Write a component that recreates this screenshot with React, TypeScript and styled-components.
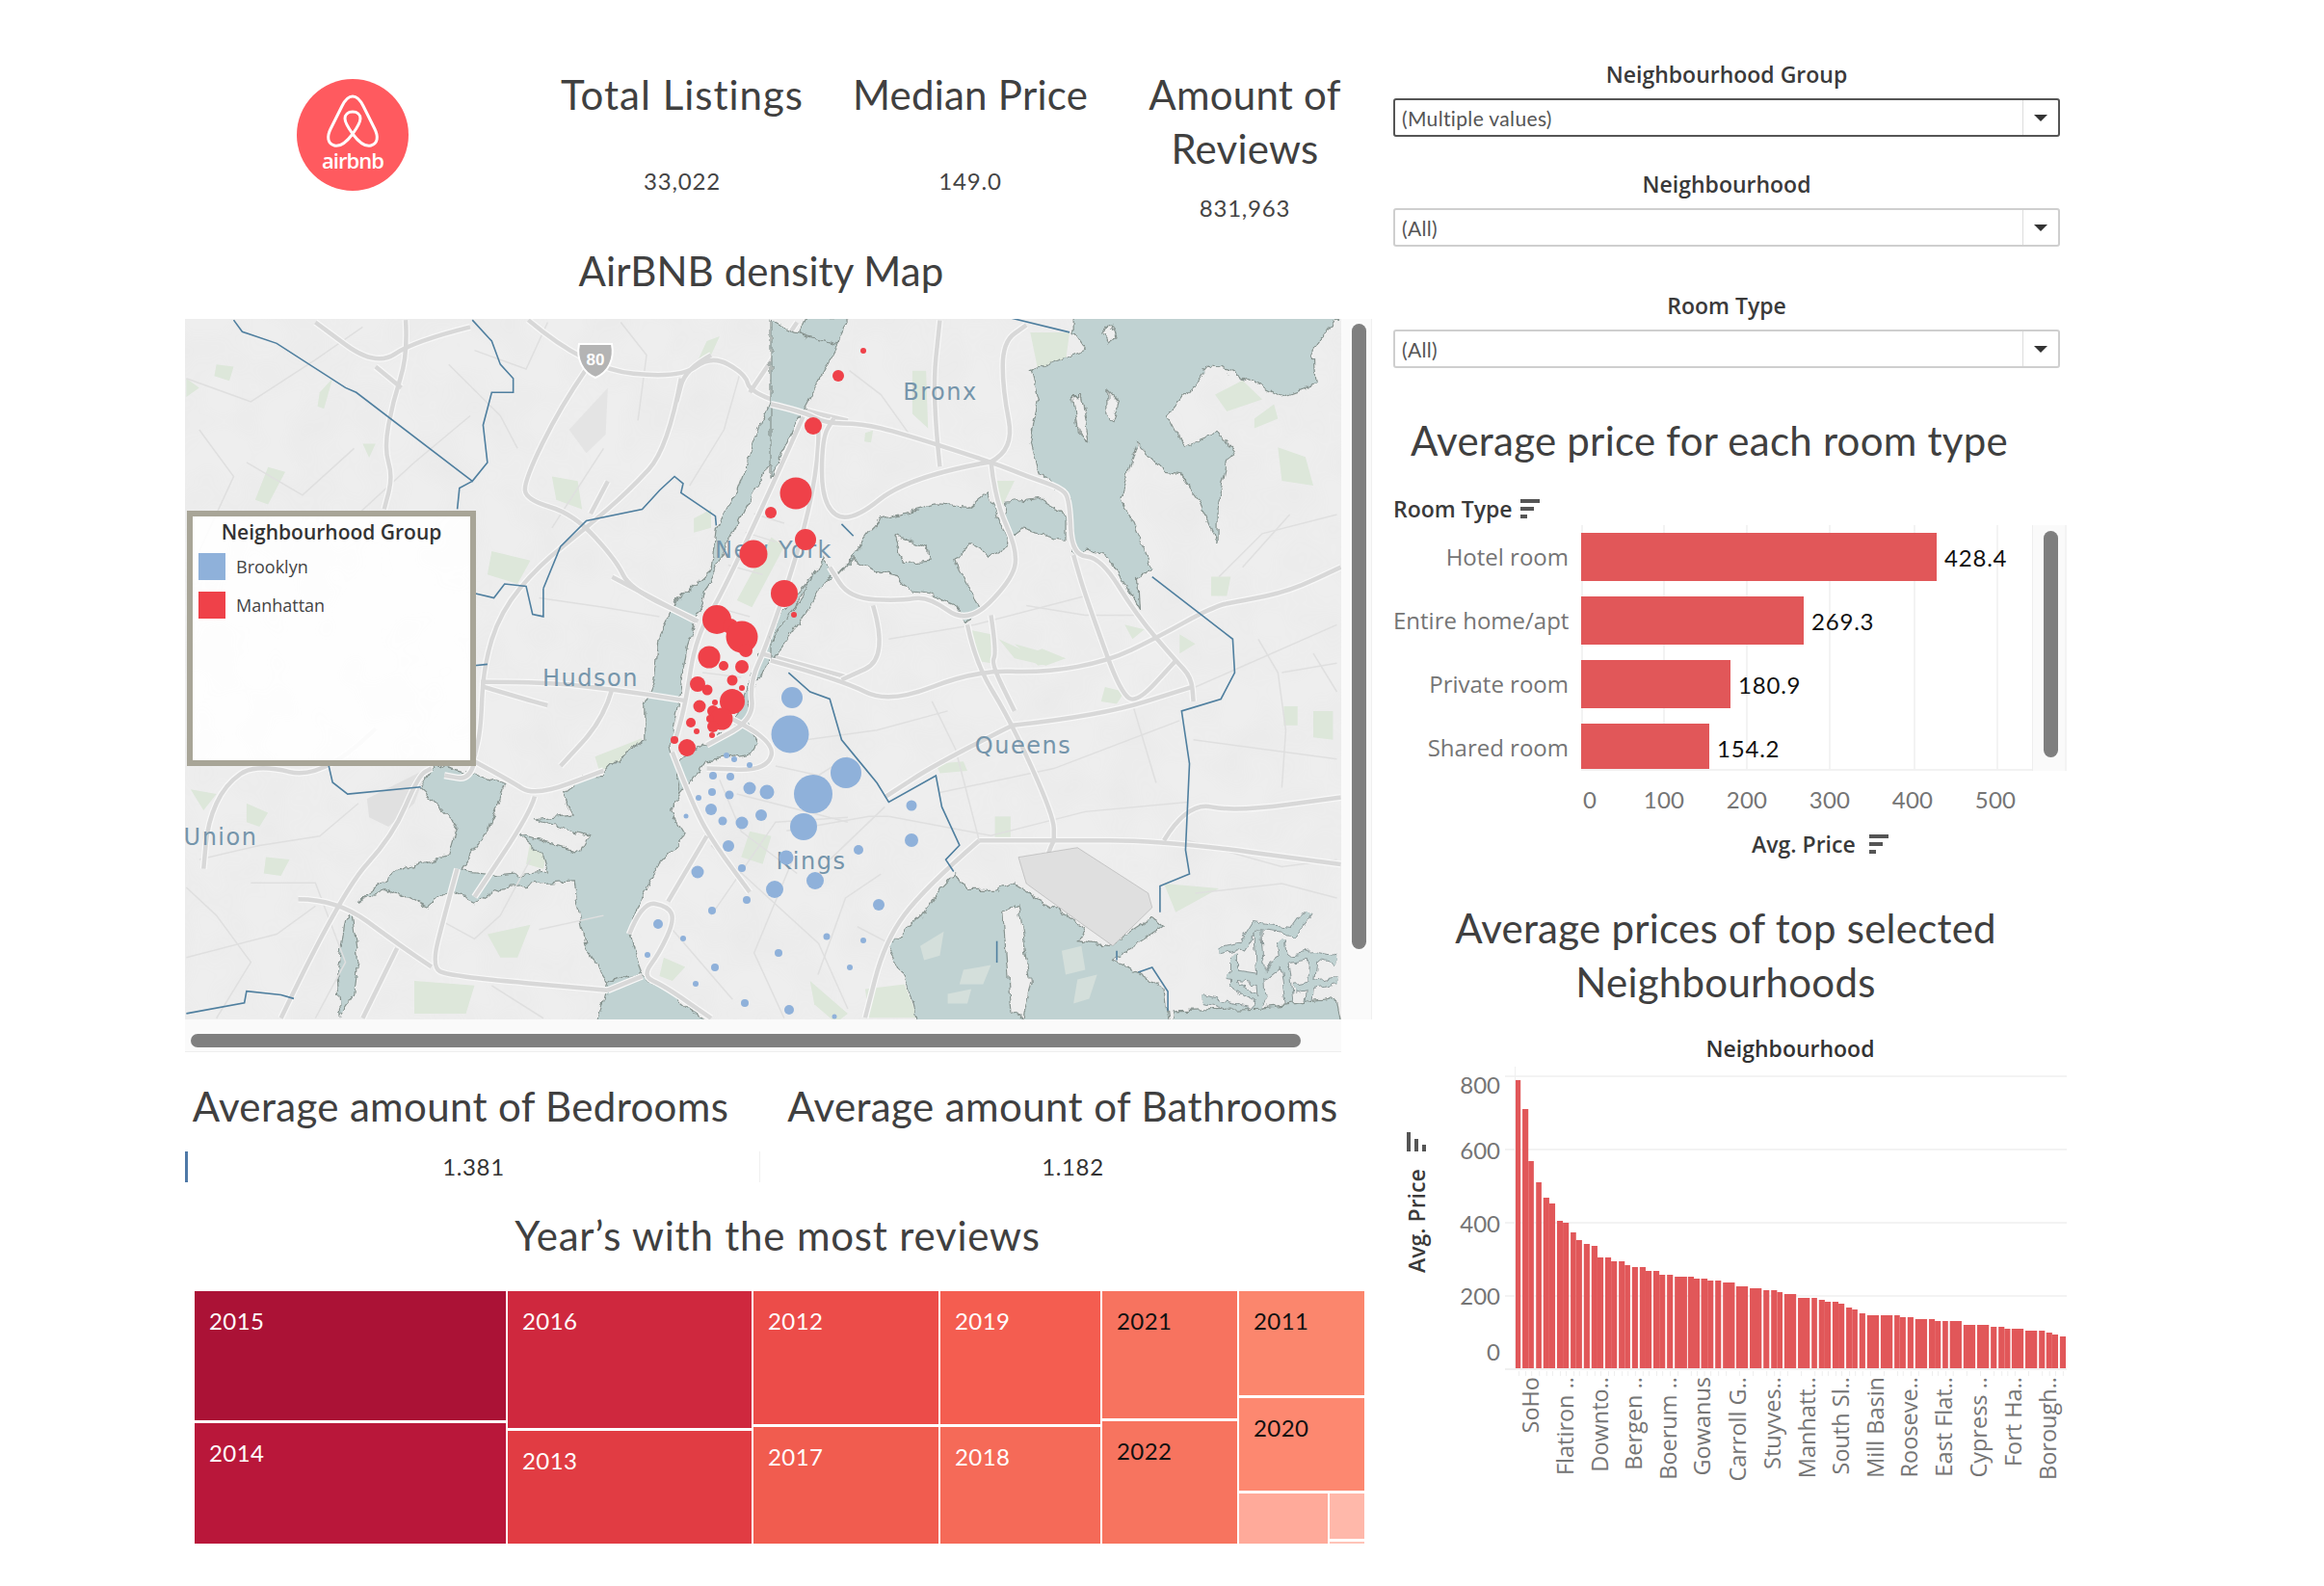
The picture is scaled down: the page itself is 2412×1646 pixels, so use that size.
import React from 'react'
import styled, { createGlobalStyle } from 'styled-components'

const GlobalStyle = createGlobalStyle`
  html, body {
    margin: 0;
    padding: 0;
    background: #fff;
  }
  body {
    font-family: Lato, 'Open Sans', sans-serif;
    color: #333;
  }
`

const Page = styled.div`
  width: 2412px;
  height: 1646px;
  padding-left: 192px;
  box-sizing: border-box;
  display: flex;
  overflow: hidden;
`

const LeftColumn = styled.div`
  width: 1254px;
  display: flex;
  flex-direction: column;
`

const RightColumn = styled.div`
  width: 699px;
  display: flex;
  flex-direction: column;
  padding-top: 62px;
  box-sizing: border-box;
`

const Header = styled.div`
  display: grid;
  grid-template-columns: 348px 336px 262px 308px;
  height: 253px;
  padding-top: 70px;
  box-sizing: border-box;
`

const LogoCell = styled.div`
  margin-top: 11px;
  display: flex;
  justify-content: center;
  align-items: flex-start;
`

const Kpi = styled.div`
  text-align: center;
`

const Title = styled.div<{ $track?: number }>`
  font-size: 42px;
  line-height: 56px;
  color: #404040;
  text-align: center;
  letter-spacing: ${({ $track }) => $track ?? 0.25}px;
`

const KpiValue = styled.div<{ $gap: number }>`
  font-size: 24px;
  line-height: 30px;
  letter-spacing: 0.8px;
  color: #444;
  margin-top: ${({ $gap }) => $gap}px;
`

const MapTitle = styled(Title)`
  width: 1196px;
  margin-bottom: 22px;
`

const ScrollFrame = styled.div`
  display: flex;
  height: 727px;
`

const MapCanvas = styled.div`
  position: relative;
  width: 1200px;
  height: 727px;
  background: #eee;
  overflow: hidden;
`

const Legend = styled.div`
  position: absolute;
  left: 2px;
  top: 199px;
  width: 300px;
  height: 265px;
  box-sizing: border-box;
  border: 6px solid #a8a597;
  background: rgba(255, 255, 255, 0.9);
  padding: 1px 6px 0;
`

const LegendTitle = styled.div`
  font-family: 'Open Sans', sans-serif;
  font-size: 21px;
  line-height: 30px;
  font-weight: 600;
  color: #333;
  text-align: center;
  margin-bottom: 7px;
`

const LegendRow = styled.div`
  display: flex;
  align-items: center;
  gap: 11px;
  height: 28px;
  margin-bottom: 12px;
  font-family: 'Open Sans', sans-serif;
  font-size: 18px;
  color: #444;
`

const Swatch = styled.span<{ $color: string }>`
  width: 28px;
  height: 28px;
  background: ${({ $color }) => $color};
`

const VerticalTrack = styled.div`
  width: 32px;
  padding: 5px 6px 0 11px;
  box-sizing: border-box;
  background: #fafafa;
  border-right: 1px solid #f0f0f0;
`

const VerticalThumb = styled.div`
  width: 15px;
  height: 649px;
  background: #7f7f7f;
  border-radius: 8px;
`

const HorizontalTrack = styled.div`
  width: 1200px;
  height: 34px;
  padding: 15px 0 0 6px;
  box-sizing: border-box;
  background: #fafafa;
  border-bottom: 1px solid #eee;
`

const HorizontalThumb = styled.div`
  width: 1152px;
  height: 14px;
  background: #7f7f7f;
  border-radius: 7px;
`

const PairTitles = styled.div`
  display: grid;
  grid-template-columns: 572px 678px;
  margin-top: 28px;
`

const PairValues = styled.div`
  display: grid;
  grid-template-columns: 596px 650px;
  margin-top: 19px;
  height: 32px;
`

const PairValue = styled.div<{ $divider?: boolean; $marker?: boolean }>`
  font-size: 24px;
  line-height: 32px;
  letter-spacing: 0.6px;
  color: #333;
  text-align: center;
  box-sizing: border-box;
  border-left: ${({ $divider, $marker }) =>
    $marker ? '3px solid #4e79a7' : $divider ? '1px solid #f0f0f0' : 'none'};
`

const YearsTitle = styled(Title)`
  width: 1230px;
  margin-top: 27px;
  margin-bottom: 30px;
`

const Treemap = styled.div`
  display: flex;
  gap: 2px;
  height: 262px;
  margin-left: 10px;
`

const TreeColumn = styled.div<{ $w: number }>`
  width: ${({ $w }) => $w}px;
  display: flex;
  flex-direction: column;
  gap: 3px;
`

const TreeCell = styled.div<{ $h: number; $bg: string; $dark?: boolean }>`
  height: ${({ $h }) => $h}px;
  background: ${({ $bg }) => $bg};
  color: ${({ $dark }) => ($dark ? '#111' : '#fff')};
  font-size: 24px;
  letter-spacing: 0.4px;
  line-height: 34px;
  padding: 14px 0 0 15px;
  box-sizing: border-box;
`

const TreeSplit = styled.div`
  display: flex;
  gap: 2px;
  height: 52px;
`

const TreeStack = styled.div`
  width: 36px;
  display: flex;
  flex-direction: column;
  gap: 3px;
`

const TreeBit = styled.div<{ $bg: string; $h: number; $w?: number }>`
  width: ${({ $w }) => ($w ? `${$w}px` : 'auto')};
  height: ${({ $h }) => $h}px;
  background: ${({ $bg }) => $bg};
`

const FilterBlock = styled.div<{ $gap: number }>`
  margin-top: ${({ $gap }) => $gap}px;
  width: 692px;
`

const FilterLabel = styled.div`
  font-family: 'Open Sans', sans-serif;
  font-size: 23px;
  line-height: 30px;
  font-weight: 600;
  color: #3a3a3a;
  text-align: center;
  margin-bottom: 10px;
`

const Dropdown = styled.div<{ $active?: boolean }>`
  height: 40px;
  box-sizing: border-box;
  border: 2px solid ${({ $active }) => ($active ? '#555' : '#cfcfcf')};
  border-radius: 3px;
  display: flex;
  align-items: center;
  font-size: 21px;
  letter-spacing: 0.35px;
  color: #555;
  padding-left: 7px;
`

const DropdownText = styled.span`
  flex: 1;
`

const DropdownArrow = styled.span`
  width: 36px;
  height: 100%;
  border-left: 1px solid #ddd;
  display: flex;
  align-items: center;
  justify-content: center;

  &::after {
    content: '';
    border-left: 7px solid transparent;
    border-right: 7px solid transparent;
    border-top: 7px solid #333;
  }
`

const RoomTitle = styled(Title)`
  margin-top: 47px;
  width: 656px;
`

const AxisHead = styled.div`
  display: flex;
  align-items: center;
  gap: 8px;
  height: 30px;
  margin-top: 28px;
  font-family: 'Open Sans', sans-serif;
  font-size: 23px;
  font-weight: 600;
  color: #3a3a3a;
`

const RoomChart = styled.div`
  display: flex;
  height: 255px;
  margin-top: 2px;
`

const RoomLabels = styled.div`
  width: 182px;
  margin-right: 13px;
  padding-top: 8px;
  display: flex;
  flex-direction: column;
  gap: 16px;
`

const RoomLabel = styled.div`
  height: 50px;
  line-height: 50px;
  font-family: 'Open Sans', sans-serif;
  font-size: 24px;
  color: #757575;
  text-align: right;
  white-space: nowrap;
`

const RoomPlot = styled.div`
  position: relative;
  width: 470px;
  height: 255px;
  padding-top: 8px;
  box-sizing: border-box;
  border-bottom: 2px solid #f2f2f2;
  display: flex;
  flex-direction: column;
  gap: 16px;
  overflow: hidden;
`

const GridLine = styled.span<{ $x: number }>`
  position: absolute;
  top: 0;
  bottom: 0;
  left: ${({ $x }) => $x}px;
  width: 2px;
  background: #f3f3f3;
`

const BarRow = styled.div`
  position: relative;
  display: flex;
  align-items: center;
  height: 50px;
  flex-shrink: 0;
`

const Bar = styled.div<{ $w: number }>`
  width: ${({ $w }) => $w}px;
  height: 100%;
  background: #e15759;
`

const BarValue = styled.span`
  margin-left: 8px;
  font-size: 24px;
  letter-spacing: 0.8px;
  color: #111;
`

const RoomTrack = styled.div`
  width: 36px;
  padding: 6px 0 0 11px;
  box-sizing: border-box;
  background: #fafafa;
  border-left: 1px solid #eee;
  border-right: 2px solid #f3f3f3;
`

const RoomThumb = styled.div`
  width: 15px;
  height: 235px;
  background: #7f7f7f;
  border-radius: 8px;
`

const Ticks = styled.div`
  display: flex;
  margin-left: 195px;
  height: 36px;
  margin-top: 12px;
`

const Tick = styled.span<{ $first?: boolean }>`
  width: ${({ $first }) => ($first ? 43 : 86)}px;
  text-align: ${({ $first }) => ($first ? 'left' : 'center')};
  padding-left: ${({ $first }) => ($first ? 2 : 0)}px;
  box-sizing: border-box;
  font-size: 24px;
  letter-spacing: 0.3px;
  line-height: 36px;
  color: #757575;
`

const AxisFoot = styled.div`
  display: flex;
  align-items: center;
  gap: 14px;
  height: 30px;
  margin-top: 13px;
  margin-left: 372px;
  font-family: 'Open Sans', sans-serif;
  font-size: 23px;
  font-weight: 600;
  color: #3a3a3a;
`

const NeighbourTitle = styled(Title)`
  margin-top: 44px;
  width: 690px;
`

const NeighbourHead = styled.div`
  margin-top: 26px;
  width: 824px;
  text-align: center;
  font-family: 'Open Sans', sans-serif;
  font-size: 23px;
  line-height: 30px;
  font-weight: 600;
  color: #333;
`

const ChartSvg = styled.svg`
  display: block;
`

const filters = [
  { label: 'Neighbourhood Group', value: '(Multiple values)', gap: 0, active: true },
  { label: 'Neighbourhood', value: '(All)', gap: 34 },
  { label: 'Room Type', value: '(All)', gap: 46 },
]

const rooms = [
  { name: 'Hotel room', value: '428.4', w: 369 },
  { name: 'Entire home/apt', value: '269.3', w: 231 },
  { name: 'Private room', value: '180.9', w: 155 },
  { name: 'Shared room', value: '154.2', w: 133 },
]

const roomGrid = [0, 85, 171, 257, 345, 431]
const roomTicks = ['100', '200', '300', '400', '500']

const treeColumns = [
  {
    w: 323,
    cells: [
      { year: '2015', h: 134, bg: '#ab1236' },
      { year: '2014', h: 125, bg: '#b9173a' },
    ],
  },
  {
    w: 253,
    cells: [
      { year: '2016', h: 142, bg: '#cf283e' },
      { year: '2013', h: 117, bg: '#e13c43' },
    ],
  },
  {
    w: 192,
    cells: [
      { year: '2012', h: 138, bg: '#ec4c49' },
      { year: '2017', h: 121, bg: '#f15c4f' },
    ],
  },
  {
    w: 166,
    cells: [
      { year: '2019', h: 138, bg: '#f45d50' },
      { year: '2018', h: 121, bg: '#f56a58' },
    ],
  },
  {
    w: 140,
    cells: [
      { year: '2021', h: 132, bg: '#f7735f', dark: true },
      { year: '2022', h: 127, bg: '#f7745f', dark: true },
    ],
  },
]

// left, right, top of each bar, read off the reference (x/2.119, y/3 from the crop corner)
const hoodBars = [
  [303, 314, 186], [318, 331, 276], [331, 343, 438], [348, 360, 504], [364, 377, 552], [377, 390, 570],
  [394, 407, 624], [407, 420, 630], [424, 436, 660], [436, 449, 684], [453, 466, 696], [470, 483, 702],
  [483, 496, 738], [500, 513, 738], [513, 526, 750], [530, 543, 750], [543, 555, 762], [559, 572, 768],
  [576, 589, 768], [589, 602, 780], [606, 619, 780], [619, 632, 792], [636, 649, 792], [653, 680, 798],
  [682, 695, 798], [695, 708, 804], [711, 725, 804], [725, 738, 810], [742, 755, 810], [759, 785, 816],
  [788, 814, 828], [818, 844, 834], [848, 861, 840], [865, 878, 840], [878, 890, 846], [894, 920, 852],
  [924, 950, 864], [954, 966, 864], [970, 983, 870], [983, 996, 876], [1000, 1013, 876], [1013, 1026, 882],
  [1030, 1043, 894], [1043, 1055, 900], [1059, 1072, 912], [1076, 1102, 918], [1106, 1132, 918],
  [1136, 1148, 918], [1148, 1161, 924], [1165, 1178, 924], [1182, 1208, 930], [1212, 1225, 930],
  [1225, 1238, 936], [1242, 1254, 936], [1258, 1284, 936], [1288, 1314, 948], [1318, 1344, 948],
  [1348, 1361, 954], [1365, 1378, 954], [1378, 1391, 960], [1394, 1420, 960], [1424, 1450, 966],
  [1454, 1467, 966], [1470, 1483, 972], [1483, 1496, 978], [1500, 1513, 984],
]

const hoodLabels: [string, number][] = [
  ['SoHo', 1597], ['Flatiron ..', 1633], ['Downto..', 1669], ['Bergen ..', 1704], ['Boerum ..', 1740],
  ['Gowanus', 1775], ['Carroll G..', 1812], ['Stuyves..', 1848], ['Manhatt..', 1884], ['South Sl..', 1919],
  ['Mill Basin', 1955], ['Rooseve..', 1990], ['East Flat..', 2026], ['Cypress ..', 2062], ['Fort Ha..', 2098],
  ['Borough..', 2134],
]

const yTicks: [string, number][] = [['800', 1136], ['600', 1204], ['400', 1280], ['200', 1355], ['0', 1413]]

const redDots = [
  [896, 364, 3], [870, 390, 6], [844, 442, 9], [826, 512, 16.5], [800, 532, 6], [836, 560, 11], [782, 575, 14.5],
  [814, 616, 14], [824, 638, 3], [744, 643, 15], [758, 650, 8], [770, 661, 16.5], [774, 675, 7], [736, 682, 11.5],
  [751, 691, 5], [770, 692, 7], [724, 710, 8], [734, 716, 5.5], [760, 706, 5.5], [770, 714, 3], [760, 728, 13],
  [742, 729, 3], [726, 733, 6.5], [740, 738, 6], [749, 746, 11.5], [737, 746, 4], [740, 754, 6], [717, 750, 5],
  [723, 759, 3], [739, 763, 3], [700, 768, 4], [713, 776, 9],
]

const blueDots = [
  [822, 724, 11], [820, 762, 19.5], [878, 802, 16], [844, 824, 20], [834, 858, 14], [754, 784, 3], [762, 788, 3],
  [778, 794, 3], [740, 805, 4], [758, 806, 4], [778, 818, 6.5], [796, 822, 7.5], [739, 822, 4], [757, 825, 4.5],
  [725, 828, 3], [738, 840, 6], [750, 852, 4.5], [770, 854, 6.5], [790, 846, 6], [712, 847, 2.5], [756, 878, 6],
  [816, 890, 7.5], [770, 901, 4], [724, 905, 6.5], [846, 914, 9], [804, 923, 9], [775, 934, 4], [739, 945, 4],
  [683, 959, 5], [709, 974, 3], [672, 991, 3], [808, 989, 4], [858, 972, 3.5], [742, 1004, 4], [722, 1021, 3],
  [773, 1041, 4], [819, 1048, 5], [946, 836, 5.5], [946, 872, 7], [891, 882, 5], [912, 939, 6], [896, 976, 3],
  [882, 1004, 3], [866, 1055, 2.5],
]

// west half is traced on crop coords, east half on its own crop coords
const westWater = [
  'M1475,20 L1440,90 L1362,255 L1310,390 L1262,470 L1250,560 L1170,625 L1130,700 L1120,790 L1095,850 L1095,925 L1040,960 L1000,1000 L960,1000 L905,1040 L930,1085 L840,1095 L965,1130 L945,1165 L800,1125 L860,1170 L870,1205 L755,1215 L665,1205 L735,1110 L770,1020 L610,975 L575,1030 L660,1105 L640,1170 L520,1205 L430,1270 L500,1245 L590,1285 L640,1245 L705,1272 L760,1240 L930,1225 L935,1270 L960,1375 L1010,1445 L1085,1425 L1060,1340 L1085,1265 L1130,1190 L1190,1130 L1155,1075 L1180,1040 L1165,975 L1155,930 L1170,860 L1195,720 L1225,640 L1262,550 L1345,400 L1405,300 L1460,190 L1541,76 L1570,20 Z',
  'M1010,1445 L1085,1425 L1160,1470 L1240,1530 L985,1530 Z',
  'M1540,570 L1500,590 L1460,610 L1420,690 L1385,760 L1345,820 L1330,880 L1360,930 L1345,955 L1240,970 L1225,990 L1180,1040 L1165,975 L1240,930 L1300,900 L1320,840 L1355,760 L1400,680 L1440,620 L1490,570 Z',
  'M400,1310 L415,1300 L430,1400 L420,1470 L390,1510 L380,1430 Z',
]

const eastWater = [
  'M770,15 L1445,15 L1380,90 L1385,160 L1300,185 L1120,115 L1010,225 L1050,290 L1140,260 L1180,295 L1160,320 L1135,420 L1135,490 L1090,400 L1040,345 L1000,340 L930,280 L890,395 L970,545 L935,560 L940,630 L860,520 L810,505 L770,510 L760,395 L680,345 L660,280 L680,190 L660,130 L720,110 L800,85 L770,50 Z',
  'M170,555 L230,490 L280,440 L330,430 L420,410 L500,415 L550,380 L605,490 L560,515 L510,490 L470,530 L510,590 L540,630 L500,650 L470,620 L400,595 L350,590 L320,560 L270,550 L210,520 Z',
  'M590,405 L680,395 L750,430 L750,485 L640,460 L610,480 Z',
  'M130,520 L170,555 L130,575 L100,620 L50,680 L0,735 L0,690 L50,640 L90,590 L110,560 Z',
  'M60,50 L170,75 L80,215 L0,355 L0,25 Z',
  'M295,1330 L380,1270 L430,1215 L470,1180 L500,1215 L570,1215 L620,1200 L800,1290 L780,1320 L860,1330 L970,1270 L1000,1290 L870,1360 L930,1385 L1000,1420 L1010,1490 L375,1490 L350,1410 Z',
  'M1020,1465 L1240,1460 L1440,1440 L1450,1490 L1020,1490 Z',
]

// marsh channels south-east of the airport
const marshChannels = [
  'M1140,1340 L1200,1330 L1230,1290 L1330,1300 L1365,1260',
  'M1160,1390 L1240,1400 L1300,1360 L1380,1350 L1440,1360',
  'M1240,1300 L1250,1440 L1230,1470',
  'M1300,1320 L1320,1460',
  'M1380,1350 L1370,1450',
  'M1180,1350 L1180,1410 L1250,1450',
  'M1100,1440 L1230,1470',
  'M1440,1400 L1330,1420',
]

const eastLand = [
  'M315,475 L400,500 L405,525 L340,530 Z',
  'M768,180 L790,180 L812,280 L780,255 Z',
  'M855,170 L885,195 L870,240 L855,220 Z',
  'M845,50 L865,32 L880,60 L860,70 Z',
  'M590,1260 L630,1240 L660,1400 L640,1480 L610,1470 Z',
]

const eastShoals = [
  'M380,1330 L440,1300 L430,1350 L390,1360 Z',
  'M490,1380 L560,1370 L540,1410 L480,1410 Z',
  'M740,1340 L790,1330 L800,1380 L750,1390 Z',
  'M450,1430 L510,1420 L500,1450 L450,1450 Z',
  'M780,1400 L830,1390 L810,1440 L770,1450 Z',
]

const westRoads = [
  'M540,25 L545,100 L510,200 L490,300 L510,360 L490,430',
  'M690,40 L560,70 L470,125 L330,30',
  'M825,25 L960,130 L1180,150 L1250,100 L1330,140 L1340,180 L1470,220 L1568,240',
  'M960,130 L900,210 L815,370 L820,410 L930,440 L1030,540 L1060,600 L1220,670',
  'M1180,150 L1150,300 L1060,390 L960,470 L850,550 L760,650 L720,770 L715,900 L700,960',
  'M715,800 L860,800 L1020,815 L1190,840',
  'M720,810 L830,840 L870,850',
  'M700,970 L780,1010 L840,1045 L1000,990',
  'M840,1045 L830,1080 L700,1260',
  'M1020,815 L1000,880 L900,980',
  'M470,900 L350,1010 L190,975 L120,1020 L80,1100 L70,1200',
  'M660,1200 L630,1300 L600,1410 L640,1430 L1010,1460',
  'M290,1265 L380,1265 L520,1360 L600,1410',
  'M250,1520 L390,1250 L510,1130 L570,1000 L600,985',
  'M440,1520 L520,1370',
  'M1160,950 L1210,1070 L1260,1150 L1340,1250',
  'M1060,1340 L1090,1270 L1150,1280 L1165,1310 L1130,1380 L1090,1430 L1140,1450 L1250,1520',
  'M1090,1430 L1010,1460',
  'M1240,1130 L1150,1270',
  'M1500,260 L1500,330 L1460,500 L1380,720 L1340,800 L1350,880 L1240,935',
  'M1470,220 L1290,590 L1215,700 L1190,850 L1165,930',
  'M1370,740 L1568,790',
  'M1020,575 L1215,670',
  'M1300,880 L1400,925 L1380,990 L1240,985',
  'M1450,30 L1340,180',
  'M470,125 L530,170',
  'M1250,100 L1190,130 L1170,200',
  'M970,440 L1010,370',
  'M700,970 L690,1010 L630,1000',
]

const eastRoads = [
  'M0,200 L80,215 L140,240 L230,240 L330,260 L560,320 L650,350 L740,375 L760,400 L765,515 L840,520 L930,640 L1030,735 L1070,770 L1075,820',
  'M560,320 L620,295 L590,170 L590,70 L650,35',
  'M560,320 L350,350 L200,450 L130,410 L130,270 L160,230',
  'M560,320 L570,400 L630,510 L610,570 L500,660 L400,600 L330,610 L200,605 L150,540',
  'M500,660 L520,740 L610,860 L720,1060 L720,1110',
  'M560,640 L575,720 L560,740 L620,840',
  'M0,735 L180,775 L300,825 L520,755 L700,760 L860,735 L975,690 L1130,620 L1200,610 L1320,590 L1450,540',
  'M860,735 L800,600 L770,515',
  'M860,735 L890,800 L930,825 L1030,735',
  'M615,870 L840,850 L1070,790',
  'M615,870 L430,945 L290,1020',
  'M260,620 L300,730 L180,775',
  'M530,1110 L720,1110 L1000,1110 L1450,1160',
  'M1000,1110 L1060,1030 L1180,1050 L1450,1020',
  'M530,1110 L390,1210 L290,1320 L240,1480',
  'M720,1110 L690,1160 L720,1210 L800,1220',
  'M770,1130 L790,1180 L760,1200',
  'M430,330 L410,180 L430,25',
]

const westMinor = [
  'M60,1180 L200,1150 L340,1130 L430,1060',
  'M1250,1150 L1500,1360 L1568,1500',
  'M1250,1300 L1400,1100 L1568,1090',
  'M1310,1040 L1568,1100',
  'M1000,300 L880,470',
  'M640,120 L760,230 L800,300',
  'M30,1390 L240,1340 L330,1280',
  'M1160,1330 L1300,1480',
  'M690,230 L560,330 L430,440',
  'M30,150 L180,200 L330,110 L440,40',
  'M170,330 L300,400 L420,300',
  'M60,260 L140,360 L60,520',
  'M1080,240 L1100,100 L1040,30',
  'M870,30 L820,130 L700,90',
  'M830,1180 L760,1300 L700,1350 L620,1310',
  'M180,1230 L330,1230 L400,1400 L330,1520',
  'M740,1450 L860,1520',
  'M1320,130 L1280,260 L1200,380',
  'M850,620 L1000,640 L1130,660',
  'M1400,980 L1500,1000 L1568,960',
  'M1440,1180 L1350,1380 L1420,1520',
  'M1270,1010 L1320,1120 L1450,1210',
  'M850,1330 L1000,1300',
  'M30,1240 L100,1300 L180,1400 L100,1520',
  'M1350,440 L1420,460 M1330,480 L1400,500 M1290,550 L1370,570 M1260,640 L1340,660 M1230,780 L1320,790',
]

const eastMinor = [
  'M300,690 L520,660 L800,600',
  'M430,1010 L720,960 L1040,860',
  'M1075,900 L1440,940',
  'M1080,790 L1440,660',
  'M410,820 L470,920 L530,1110',
  'M920,825 L980,990',
  'M300,1060 L560,1100 L800,1050 L1060,1030',
  'M1060,1110 L1300,1165 L1440,1150',
  'M1300,760 L1440,740',
  'M150,1150 L290,1040',
  'M220,1290 L290,1320',
  'M1380,720 L1440,800',
  'M200,130 L280,180 L350,260',
  'M1140,560 L1250,470 L1440,430',
  'M1200,540 L1320,430',
  'M90,900 L270,880 L450,840',
  'M40,1090 L250,1060 L300,1060',
  'M1080,1220 L1300,1200 L1440,1230',
  'M120,1390 L190,1230 L280,1180',
  'M650,620 L800,640 L930,640',
  'M1240,690 L1290,760 L1310,880 L1300,1000',
]

const westParks = [
  'M1310,625 L1390,490 L1420,510 L1345,640 Z',
  'M1340,1120 L1390,1130 L1370,1190 L1320,1175 Z',
  'M215,1175 L270,1180 L250,1215 L210,1210 Z',
  'M730,1340 L830,1320 L800,1390 L760,1390 Z',
  'M560,1440 L700,1450 L680,1510 L560,1510 Z',
  'M1140,1390 L1190,1410 L1160,1440 L1130,1430 Z',
  'M880,360 L940,370 L950,430 L890,410 Z',
  'M220,340 L260,350 L220,420 L190,410 Z',
  'M100,120 L140,125 L130,155 L95,145 Z',
  'M980,960 L1090,920 L1060,970 L990,990 Z',
  'M40,1030 L100,1040 L70,1075 Z',
  'M340,180 L370,150 L350,215 L335,210 Z',
  'M440,290 L470,290 L455,320 Z',
  'M30,150 L60,170 L30,190 Z',
  'M740,520 L830,540 L800,590 L730,570 Z',
  'M1210,450 L1250,430 L1250,470 L1210,480 Z',
  'M1240,70 L1270,60 L1250,100 L1220,110 Z',
  'M170,1060 L220,1080 L200,1110 L170,1100 Z',
  'M830,1140 L870,1160 L860,1200 L820,1190 Z',
  'M1480,1440 L1568,1510 L1540,1530 L1490,1490 Z',
]

const eastParks = [
  'M360,130 L395,130 L400,250 L360,220 Z',
  'M660,50 L760,50 L750,110 L680,130 Z',
  'M500,670 L560,680 L560,740 L520,735 Z',
  'M620,700 L750,730 L680,745 Z',
  'M1120,560 L1170,560 L1160,600 L1120,600 Z',
  'M1230,230 L1280,200 L1290,230 L1230,250 Z',
  'M1290,290 L1360,310 L1380,370 L1300,360 Z',
  'M1305,830 L1340,830 L1340,870 L1305,870 Z',
  'M1380,840 L1430,840 L1430,900 L1380,895 Z',
  'M570,1060 L610,1060 L610,1105 L570,1105 Z',
  'M900,660 L950,670 L920,690 Z',
  'M250,1480 L240,1420 L340,1410 L375,1480 Z',
  'M1040,680 L1080,700 L1040,720 Z',
  'M1000,1200 L1140,1210 L1030,1260 Z',
  'M240,260 L260,255 L255,280 L238,278 Z',
  'M560,360 L620,360 L590,410 Z',
  'M850,790 L900,800 L880,825 L840,820 Z',
  'M580,690 L660,720 L690,710 L750,730 L700,745 L620,730 Z',
  'M1130,180 L1200,150 L1250,190 L1160,215 Z',
  'M420,950 L490,945 L500,965 L430,970 Z',
]

const westBorders = [
  'M140,25 L160,50 L240,75 L400,170 L425,180 L695,370 L730,330 L720,250 L740,180 L790,180 L790,150 L760,120 L740,70 L695,25',
  'M695,370 L665,385 L660,430',
  'M860,600 L900,510 L960,455 L1090,430 L1130,390 L1165,360 L1185,375 L1180,395 L1260,445 L1262,465',
  'M700,610 L745,620 L770,590 L820,595 L835,655 L860,660 L860,600',
  'M700,765 L730,762',
  'M360,975 L370,1015 L405,1040 L575,1025',
  'M30,1510 L165,1487 L170,1462 L250,1470 L280,1478',
]

const eastBorders = [
  'M610,20 L760,50',
  'M180,450 L210,475',
  'M45,760 L100,800 L150,815 L180,900 L230,950 L270,990 L300,1030 L420,975 L435,1040 L480,1120 L445,1150 L465,1175',
  'M970,560 L1175,690 L1180,760 L1145,815 L1045,840 L1065,950 L1055,1130 L1065,1180 L990,1205 L990,1260',
  'M935,1385 L970,1375 L1010,1425 L1010,1465',
  'M575,1320 L575,1365',
  'M880,1340 L880,1360',
]

const WEST_FRAME = 'translate(180 320) scale(0.4464 0.4847)'
const EAST_FRAME = 'translate(800 320) scale(0.408 0.4975)'

// rounds the corners of a traced polyline so roads don't look angular
const smooth = (d: string) =>
  d
    .split('M')
    .filter(Boolean)
    .map((part) => {
      const pts = part.trim().split(/\s*L/).map((p) => p.trim().split(',').map(Number))
      let out = `M${pts[0].join(',')}`
      for (let i = 1; i < pts.length - 1; i++) {
        const mx = (pts[i][0] + pts[i + 1][0]) / 2
        const my = (pts[i][1] + pts[i + 1][1]) / 2
        out += ` Q${pts[i].join(',')} ${mx},${my}`
      }
      return `${out} L${pts[pts.length - 1].join(',')}`
    })
    .join(' ')

const MapLabel = styled.text`
  font-family: 'DejaVu Sans', sans-serif;
  font-size: 24px;
  fill: #7595ab;
  letter-spacing: 1.5px;
  text-anchor: middle;
`

const scaled = { vectorEffect: 'non-scaling-stroke' as const }

const MapLayer: React.FC<{
  transform: string
  water: string[]
  parks: string[]
  land?: string[]
  roads: string[]
  minor: string[]
  borders: string[]
  channels?: string[]
  shoals?: string[]
}> = ({ transform, water, parks, land = [], roads, minor, borders, channels = [], shoals = [] }) => (
  <g transform={transform}>
    <g filter="url(#soft)">
      {parks.map((d, i) => (
        <path key={i} d={d} fill="#dde7da" />
      ))}
    </g>
    <g filter="url(#coast)">
      {channels.map((d, i) => (
        <path key={i} d={d} fill="none" stroke="#8c9898" strokeWidth={9} {...scaled} />
      ))}
      {channels.map((d, i) => (
        <path key={i} d={d} fill="none" stroke="#c0d2d2" strokeWidth={7} {...scaled} />
      ))}
      {water.map((d, i) => (
        <path key={i} d={d} fill="#c0d2d2" stroke="#87938f" strokeWidth={1.2} {...scaled} />
      ))}
      {land.map((d, i) => (
        <path key={i} d={d} fill="#eeeeee" stroke="#87938f" strokeWidth={1.2} {...scaled} />
      ))}
    </g>
    {shoals.map((d, i) => (
      <path key={i} d={d} fill="#d4dfdb" />
    ))}
    {minor.map((d, i) => (
      <path key={i} d={d} fill="none" stroke="#dfdfdf" strokeWidth={1.5} {...scaled} />
    ))}
    {roads.map((d, i) => (
      <path key={i} d={smooth(d)} fill="none" stroke="#f8f8f8" strokeWidth={7} {...scaled} />
    ))}
    {roads.map((d, i) => (
      <path key={i} d={smooth(d)} fill="none" stroke="#d8d8d8" strokeWidth={4.5} {...scaled} />
    ))}
    {borders.map((d, i) => (
      <path key={i} d={d} fill="none" stroke="#4f7f9f" strokeWidth={1.6} {...scaled} />
    ))}
  </g>
)

const DensityMap = () => (
  <svg width={1200} height={727} viewBox="192 331 1200 727">
    <defs>
      <filter id="coast" x="-5%" y="-5%" width="110%" height="110%">
        <feTurbulence type="fractalNoise" baseFrequency="0.035" numOctaves={3} seed={4} result="n" />
        <feDisplacementMap in="SourceGraphic" in2="n" scale={22} xChannelSelector="R" yChannelSelector="G" />
      </filter>
      <filter id="soft">
        <feGaussianBlur stdDeviation={1.5} />
      </filter>
      <filter id="mottle" x="0" y="0" width="100%" height="100%">
        <feTurbulence type="fractalNoise" baseFrequency="0.02" numOctaves={2} seed={9} />
        <feColorMatrix values="0 0 0 0 0.5  0 0 0 0 0.5  0 0 0 0 0.5  0 0 0 0.5 -0.18" />
      </filter>
    </defs>
    <rect x={192} y={331} width={1200} height={727} fill="#eeeeee" />
    <rect x={192} y={331} width={1200} height={727} filter="url(#mottle)" opacity={0.25} />
    <path d="M450,1050 L590,985 L560,1060 L500,1110 L455,1090 Z" fill="#e0e0e0" transform={WEST_FRAME} />
    <path d="M920,260 L1010,170 L1005,270 L960,310 Z" fill="#e4e4e4" transform={WEST_FRAME} />
    <MapLayer
      transform={WEST_FRAME}
      water={westWater}
      parks={westParks}
      roads={westRoads}
      minor={westMinor}
      borders={westBorders}
    />
    <MapLayer
      transform={EAST_FRAME}
      water={eastWater}
      parks={eastParks}
      land={eastLand}
      roads={eastRoads}
      minor={eastMinor}
      borders={eastBorders}
      channels={marshChannels}
      shoals={eastShoals}
    />
    <path
      d="M630,1145 L780,1125 L960,1220 L970,1250 L870,1330 L810,1295 L650,1200 Z"
      fill="#dfdfdf"
      stroke="#9a9a9a"
      transform={EAST_FRAME}
    />
    <MapLabel x={613} y={712}>Hudson</MapLabel>
    <MapLabel x={803} y={579}>New York</MapLabel>
    <MapLabel x={976} y={415}>Bronx</MapLabel>
    <MapLabel x={1062} y={782}>Queens</MapLabel>
    <MapLabel x={842} y={902}>Kings</MapLabel>
    <MapLabel x={229} y={877}>Union</MapLabel>
    <path d="M601,357 L635,357 C638,372 632,386 618,392 C604,386 598,372 601,357 Z" fill="#b4b4b4" stroke="#fff" strokeWidth={2} />
    <text x={618} y={379} fontFamily="'Liberation Sans', sans-serif" fontSize={17} fontWeight={700} fill="#fff" textAnchor="middle">
      80
    </text>
    {blueDots.map(([x, y, r], i) => (
      <circle key={i} cx={x} cy={y} r={r} fill="#8fb1da" />
    ))}
    {redDots.map(([x, y, r], i) => (
      <circle key={i} cx={x} cy={y} r={r} fill="#ef4149" />
    ))}
  </svg>
)

const AirbnbLogo = () => (
  <svg width={116} height={118} viewBox="0 0 116 118">
    <circle cx={58} cy={59} r={58} fill="#ff5a5f" />
    <g fill="none" stroke="#fff" strokeWidth={3} strokeLinejoin="round">
      <path d="M58 19 C53 19 50 23 47 29 L35 53 C31 61 32 68 39 70 C46 72 52 66 58 58 C64 66 70 72 77 70 C84 68 85 61 81 53 L69 29 C66 23 63 19 58 19 Z" />
      <path d="M58 58 C53 51 50 46 50 42 C50 38 53 35 58 35 C63 35 66 38 66 42 C66 46 63 51 58 58 Z" />
    </g>
    <text x={58} y={94} fill="#fff" fontFamily="'Open Sans', sans-serif" fontSize={22} fontWeight={600} textAnchor="middle" letterSpacing={-1}>
      airbnb
    </text>
  </svg>
)

const SortIcon = () => (
  <svg width={20} height={20} viewBox="0 0 20 20">
    <rect x={0} y={0} width={20} height={4} fill="#555" />
    <rect x={0} y={8} width={14} height={4} fill="#555" />
    <rect x={0} y={16} width={7} height={4} fill="#555" />
  </svg>
)

const NeighbourChart = () => (
  <ChartSvg width={699} height={460} viewBox="1446 1104 699 460">
    {[1118, 1194, 1270, 1346].map((y) => (
      <rect key={y} x={1562} y={y - 1} width={583} height={2} fill="#f3f3f3" />
    ))}
    <rect x={1562} y={1421} width={583} height={2} fill="#f0f0f0" />
    <rect x={1572} y={1108} width={1} height={313} fill="#f0f0f0" />
    {hoodBars.map(([l, r, top], i) => {
      const x = 1430 + l / 2.119
      const y = 1060 + top / 3
      return <rect key={i} x={x} y={y} width={(r - l) / 2.119} height={1421 - y} fill="#e15759" />
    })}
    {hoodBars.map(([l], i) => (
      <rect key={i} x={1430 + l / 2.119 + 3} y={1424} width={1} height={5} fill="#eee" />
    ))}
    {yTicks.map(([t, y]) => (
      <text key={t} x={1557} y={y} fontFamily="Lato, sans-serif" fontSize={24} fill="#757575" textAnchor="end">
        {t}
      </text>
    ))}
    {hoodLabels.map(([t, x]) => (
      <text
        key={t}
        transform={`translate(${x} 1430) rotate(-90)`}
        fontFamily="'Open Sans', sans-serif"
        fontSize={23.5}
        fill="#757575"
        textAnchor="end"
      >
        {t}
      </text>
    ))}
    <text
      transform="translate(1479 1322) rotate(-90)"
      fontFamily="'Open Sans', sans-serif"
      fontSize={23}
      fontWeight={600}
      fill="#3a3a3a"
    >
      Avg. Price
    </text>
    <rect x={1460} y={1176} width={4} height={20} fill="#555" />
    <rect x={1468} y={1183} width={4} height={13} fill="#555" />
    <rect x={1476} y={1189} width={4} height={7} fill="#555" />
  </ChartSvg>
)

export default function App() {
  return (
    <Page>
      <GlobalStyle />
      <LeftColumn>
        <Header>
          <LogoCell>
            <AirbnbLogo />
          </LogoCell>
          <Kpi>
            <Title $track={1}>Total Listings</Title>
            <KpiValue $gap={47}>33,022</KpiValue>
          </Kpi>
          <Kpi>
            <Title>Median Price</Title>
            <KpiValue $gap={47}>149.0</KpiValue>
          </Kpi>
          <Kpi>
            <Title>Amount of Reviews</Title>
            <KpiValue $gap={19}>831,963</KpiValue>
          </Kpi>
        </Header>
        <MapTitle $track={0.1}>AirBNB density Map</MapTitle>
        <ScrollFrame>
          <MapCanvas>
            <DensityMap />
            <Legend>
              <LegendTitle>Neighbourhood Group</LegendTitle>
              <LegendRow>
                <Swatch $color="#8fb1da" />
                Brooklyn
              </LegendRow>
              <LegendRow>
                <Swatch $color="#ef4149" />
                Manhattan
              </LegendRow>
            </Legend>
          </MapCanvas>
          <VerticalTrack>
            <VerticalThumb />
          </VerticalTrack>
        </ScrollFrame>
        <HorizontalTrack>
          <HorizontalThumb />
        </HorizontalTrack>
        <PairTitles>
          <Title $track={0.35}>Average amount of Bedrooms</Title>
          <Title $track={0.4}>Average amount of Bathrooms</Title>
        </PairTitles>
        <PairValues>
          <PairValue $marker>1.381</PairValue>
          <PairValue $divider>1.182</PairValue>
        </PairValues>
        <YearsTitle $track={0.8}>Year’s with the most reviews</YearsTitle>
        <Treemap>
          {treeColumns.map((col) => (
            <TreeColumn key={col.w} $w={col.w}>
              {col.cells.map((c) => (
                <TreeCell key={c.year} $h={c.h} $bg={c.bg} $dark={'dark' in c}>
                  {c.year}
                </TreeCell>
              ))}
            </TreeColumn>
          ))}
          <TreeColumn $w={130}>
            <TreeCell $h={109} $bg="#fb866d" $dark>
              2011
            </TreeCell>
            <TreeCell $h={96} $bg="#fd8870" $dark>
              2020
            </TreeCell>
            <TreeSplit>
              <TreeBit $bg="#ffaa9a" $h={52} $w={92} />
              <TreeStack>
                <TreeBit $bg="#ffb8aa" $h={47} />
                <TreeBit $bg="#ffc4b8" $h={2} />
              </TreeStack>
            </TreeSplit>
          </TreeColumn>
        </Treemap>
      </LeftColumn>
      <RightColumn>
        {filters.map((f) => (
          <FilterBlock key={f.label} $gap={f.gap}>
            <FilterLabel>{f.label}</FilterLabel>
            <Dropdown $active={f.active}>
              <DropdownText>{f.value}</DropdownText>
              <DropdownArrow />
            </Dropdown>
          </FilterBlock>
        ))}
        <RoomTitle>Average price for each room type</RoomTitle>
        <AxisHead>
          Room Type
          <SortIcon />
        </AxisHead>
        <RoomChart>
          <RoomLabels>
            {rooms.map((r) => (
              <RoomLabel key={r.name}>{r.name}</RoomLabel>
            ))}
          </RoomLabels>
          <RoomPlot>
            {roomGrid.map((x) => (
              <GridLine key={x} $x={x} />
            ))}
            {rooms.map((r) => (
              <BarRow key={r.name}>
                <Bar $w={r.w} />
                <BarValue>{r.value}</BarValue>
              </BarRow>
            ))}
          </RoomPlot>
          <RoomTrack>
            <RoomThumb />
          </RoomTrack>
        </RoomChart>
        <Ticks>
          <Tick $first>0</Tick>
          {roomTicks.map((t) => (
            <Tick key={t}>{t}</Tick>
          ))}
        </Ticks>
        <AxisFoot>
          Avg. Price
          <SortIcon />
        </AxisFoot>
        <NeighbourTitle>
          Average prices of top selected
          <br />
          Neighbourhoods
        </NeighbourTitle>
        <NeighbourHead>Neighbourhood</NeighbourHead>
        <NeighbourChart />
      </RightColumn>
    </Page>
  )
}
